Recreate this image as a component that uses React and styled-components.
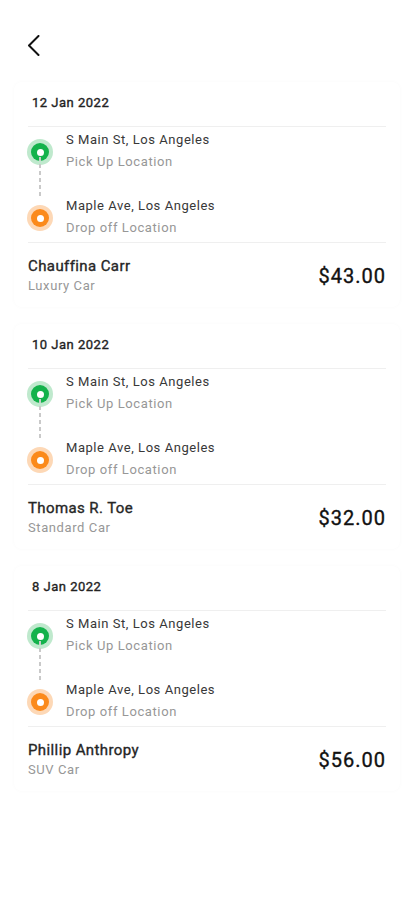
import React from "react";
import styled, { createGlobalStyle, css } from "styled-components";

const Global = createGlobalStyle`
  html, body { margin: 0; padding: 0; background: #ffffff; }
  body { font-family: Roboto, "Noto Sans", "Liberation Sans", sans-serif; -webkit-font-smoothing: antialiased; }
  * { box-sizing: border-box; }
`;

const medium = css`
  font-weight: 400;
  -webkit-text-stroke: 0.35px currentColor;
`;

const Page = styled.div`
  width: 414px;
  min-height: 912px;
  background: #fff;
  display: flex;
  flex-direction: column;
`;

const Header = styled.header`
  height: 82px;
  display: flex;
  align-items: flex-start;
  padding: 35px 0 0 27px;
`;

const BackButton = styled.button`
  border: 0;
  background: none;
  padding: 0;
  width: 13px;
  height: 21px;
  display: flex;
  cursor: pointer;
`;

const List = styled.div`
  display: flex;
  flex-direction: column;
  gap: 17px;
  padding: 0 14px;
`;

const Card = styled.section`
  background: #fff;
  border-radius: 8px;
  box-shadow: 0 0 4px rgba(0, 0, 0, 0.022);
  padding: 13px 14px 11px;
  display: flex;
  flex-direction: column;
`;

const DateLabel = styled.div`
  ${medium};
  font-size: 13px;
  line-height: 16px;
  color: #222;
  letter-spacing: 0.5px;
  padding-left: 4px;
  padding-bottom: 15px;
  border-bottom: 1px solid #efefef;
`;

const Stops = styled.div`
  display: flex;
  flex-direction: column;
  gap: 24px;
  padding: 3px 0 4px;
  border-bottom: 1px solid #efefef;
`;

const Stop = styled.div`
  position: relative;
  display: flex;
  align-items: center;
  gap: 14px;
`;

const Marker = styled.div`
  width: 24px;
  display: flex;
  justify-content: center;
  flex: none;
  position: relative;
  top: 1px;
`;

const Dot = styled.span`
  width: 18px;
  height: 18px;
  border-radius: 50%;
  background: ${(p) => p.$color};
  box-shadow: 0 0 0 4px ${(p) => p.$glow};
  display: flex;
  align-items: center;
  justify-content: center;
  &::before {
    content: "";
    width: 7px;
    height: 7px;
    border-radius: 50%;
    background: #fff;
  }
`;

const Connector = styled.span`
  position: absolute;
  left: 11px;
  top: 14px;
  height: 40px;
  width: 2px;
  background: repeating-linear-gradient(
    to bottom,
    #c9c9c9 0,
    #c9c9c9 4px,
    transparent 4px,
    transparent 7px
  );
`;

const StopText = styled.div`
  display: flex;
  flex-direction: column;
  gap: 2px;
`;

const Place = styled.div`
  font-size: 13px;
  line-height: 20px;
  color: #383838;
  letter-spacing: 0.55px;
`;

const Sub = styled.div`
  font-size: 13px;
  line-height: 20px;
  color: #979797;
  letter-spacing: 0.6px;
`;

const Footer = styled.div`
  display: flex;
  align-items: center;
  justify-content: space-between;
  padding-top: 13px;
`;

const Driver = styled.div`
  display: flex;
  flex-direction: column;
`;

const Name = styled.div`
  ${medium};
  font-size: 15px;
  line-height: 20px;
  color: #262626;
  letter-spacing: 0.4px;
`;

const Price = styled.div`
  ${medium};
  font-size: 20px;
  color: #111;
  letter-spacing: 1px;
  line-height: 24px;
`;

const trips = [
  { date: "12 Jan 2022", name: "Chauffina Carr", car: "Luxury Car", price: "$43.00" },
  { date: "10 Jan 2022", name: "Thomas R. Toe", car: "Standard Car", price: "$32.00" },
  { date: "8 Jan 2022", name: "Phillip Anthropy", car: "SUV Car", price: "$56.00" },
];

function TripCard({ trip }) {
  return (
    <Card>
      <DateLabel>{trip.date}</DateLabel>
      <Stops>
        <Stop>
          <Marker>
            <Dot $color="#13b24b" $glow="#bfe9cd" />
            <Connector />
          </Marker>
          <StopText>
            <Place>S Main St, Los Angeles</Place>
            <Sub>Pick Up Location</Sub>
          </StopText>
        </Stop>
        <Stop>
          <Marker>
            <Dot $color="#fb8a1b" $glow="#fdd8b6" />
          </Marker>
          <StopText>
            <Place>Maple Ave, Los Angeles</Place>
            <Sub>Drop off Location</Sub>
          </StopText>
        </Stop>
      </Stops>
      <Footer>
        <Driver>
          <Name>{trip.name}</Name>
          <Sub>{trip.car}</Sub>
        </Driver>
        <Price>{trip.price}</Price>
      </Footer>
    </Card>
  );
}

export default function App() {
  return (
    <Page>
      <Global />
      <Header>
        <BackButton aria-label="Back">
          <svg width="13" height="21" viewBox="0 0 13 21" fill="none">
            <polyline points="11.5,1 2,10.5 11.5,20" stroke="#111" strokeWidth="2" strokeLinecap="round" strokeLinejoin="round" />
          </svg>
        </BackButton>
      </Header>
      <List>
        {trips.map((t) => (
          <TripCard key={t.date} trip={t} />
        ))}
      </List>
    </Page>
  );
}
